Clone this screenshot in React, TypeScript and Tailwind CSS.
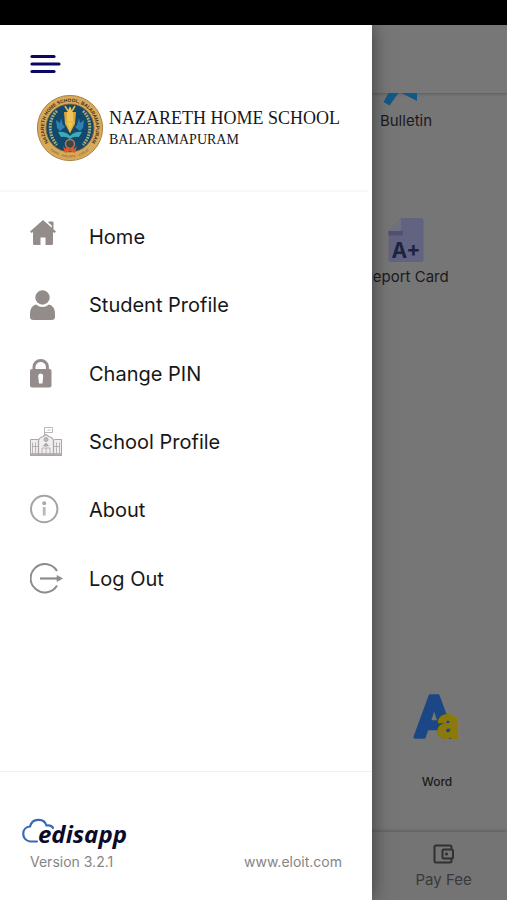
import type { ReactNode } from "react";

const sans = "font-['Inter','Liberation_Sans',sans-serif]";

function MenuLinesIcon() {
  return (
    <svg width="31" height="20" viewBox="0 0 31 20" aria-hidden="true">
      <g stroke="#0c0761" strokeWidth="3.2" strokeLinecap="round">
        <path d="M2 2.5H24" />
        <path d="M2 10H29" />
        <path d="M2 17.5H24" />
      </g>
    </svg>
  );
}

function SchoolSeal() {
  return (
    <svg width="68" height="68" viewBox="0 0 68 68" className="shrink-0" aria-hidden="true">
      <circle cx="34" cy="34" r="32.6" fill="#d9a95a" stroke="#a88348" strokeWidth="1" />
      <circle cx="34" cy="34" r="24" fill="#12486b" stroke="#8d6a35" strokeWidth="0.8" />
      <defs>
        <path id="sealTop" d="M12.500 48.500A26 26 0 1 1 55.500 48.500" />
        <path id="sealBottom" d="M14 56A30 30 0 0 0 54 56" />
      </defs>
      <text className="font-['Liberation_Sans',sans-serif]" fontSize="4.8" fontWeight="700" fill="#3d3218">
        <textPath href="#sealTop" startOffset="50%" textAnchor="middle">
          NAZARETH HOME SCHOOL, BALARAMAPURAM
        </textPath>
      </text>
      <text className="font-['Liberation_Sans',sans-serif]" fontSize="3.5" fill="#7b6032">
        <textPath href="#sealBottom" startOffset="50%" textAnchor="middle">
          LEARN · RADIATE · CREATE
        </textPath>
      </text>
      <path d="M21 17C12 25 12 41 21 51M47 17C56 25 56 41 47 51" fill="none" stroke="#a9ab78" strokeWidth="3" strokeDasharray="1.8 1" />
      <path d="M20 26l4 3 1-5 2 7 2 2-5 4-3-3zM48 26l-4 3-1-5-2 7-2 2 5 4 3-3z" fill="#2f83b4" />
      <path d="M28 18h12l-1 12-5 9-5-9z" fill="#dca638" />
      <path d="M31 19l3-7 3 7v8h-6z" fill="#f0c45a" />
      <path d="M29 12l3 5M39 12l-3 5M31 28l3 9 3-9z" stroke="#e5bd4f" strokeWidth="1.500" fill="#f2cf3c" />
      <path d="M22 38q7-1 12 4 5-5 12-4l-3 5q-5-1-9 2-4-3-9-2z" fill="#3ea9b8" />
      <circle cx="34" cy="50" r="4.500" fill="#41444d" stroke="#a88055" strokeWidth="1.500" />
      <path d="M27 52l3 3 1-3 3 4 3-4 1 3 3-3-2 7-5-2-5 2z" fill="#e0592b" />
    </svg>
  );
}

function HomeIcon() {
  return (
    <svg width="34" height="32" viewBox="0 0 34 32" aria-hidden="true">
      <path d="M13 1L0 12.500 1.500 14 3 13V24.500Q3 26 4.500 26H10.500V18.500H15.500V26H21.500Q23 26 23 24.500V13L24.500 14 26 12.500 23.500 10.300V3.500Q23.500 2.500 22.500 2.500H18.500V3.800L21.800 6.500V8.800Z" fill="#938c8b" />
    </svg>
  );
}

function StudentIcon() {
  return (
    <svg width="34" height="32" viewBox="0 0 34 32" fill="#938c8b" aria-hidden="true">
      <circle cx="12.500" cy="8.500" r="7.200" />
      <path d="M6 15.500Q12.500 20.500 19 15.500C23 16.500 25 20 25 25V28Q25 31 21.500 31H3.500Q0 31 0 28V25C0 20 2 16.500 6 15.500Z" />
    </svg>
  );
}

function LockIcon() {
  return (
    <svg width="34" height="32" viewBox="0 0 34 32" aria-hidden="true">
      <path d="M4 14V9a6.700 6.500 0 0 1 13.400 0V14" fill="none" stroke="#938c8b" strokeWidth="3" />
      <rect x="0" y="11" width="21.500" height="18.500" rx="2" fill="#938c8b" />
      <path d="M10.700 15.500a2.600 2.600 0 0 1 2.400 3.500L12.500 25.500H9L8.300 19a2.600 2.600 0 0 1 2.400-3.500Z" fill="#fff" />
    </svg>
  );
}

function SchoolIcon() {
  return (
    <svg width="34" height="32" viewBox="0 0 34 32" fill="none" stroke="#aaa6a5" aria-hidden="true">
      <path d="M.5 13.500V29.500H31.500V13.500H24.500M.5 13.500H8" fill="#f0eeee" />
      <path d="M8.500 29V14Q10 11 13 10.500L16 8.500 19 10.500Q22.500 11.500 23.500 14V29" fill="#f0eeee" strokeWidth="1.200" />
      <path d="M14.500 9V1.500H22.500V6.500H14.500M17.500 4h3M.5 27.500H31.500M2.500 16.500v11M5.500 16.500v11M26.500 16.500v11M29.500 16.500v11M2 20.500H8M24 20.500H30M12 29V22H20V29M16 22V29" strokeWidth=".8" />
      <circle cx="16" cy="13.500" r="2" fill="#c0bcbc" />
      <path d="M13.500 20l2.500-3 2.500 3z" fill="#aaa6a6" strokeWidth=".8" />
      <path d="M0 29H32" strokeWidth="1.800" />
    </svg>
  );
}

function InfoIcon() {
  return (
    <svg width="34" height="32" viewBox="0 0 34 32" fill="none" aria-hidden="true">
      <circle cx="14.200" cy="15" r="13.200" stroke="#a5a4a4" strokeWidth="2" />
      <circle cx="14.200" cy="9.300" r="2" fill="#aaa9a9" />
      <path d="M14.200 13V21.500" stroke="#bab9b9" strokeWidth="2.800" />
    </svg>
  );
}

function LogOutIcon() {
  return (
    <svg width="34" height="32" viewBox="0 0 34 32" fill="none" stroke="#8d8b8c" strokeWidth="2" aria-hidden="true">
      <path d="M27 8A14.200 14.200 0 1 0 27 22.500" />
      <path d="M10 15.500H28" strokeWidth="2.200" />
      <path d="M27 12.500L32.500 15.500 27 18.500Z" fill="#8d8b8c" strokeWidth=".6" />
    </svg>
  );
}

function BulletinIcon() {
  return (
    <svg width="48" height="14" viewBox="0 0 48 14" aria-hidden="true">
      <path d="M6.500 0H16.500L7.500 12.500 1.500 9ZM19.500 0H35V8Z" fill="#135987" />
    </svg>
  );
}

function ReportCardIcon() {
  return (
    <svg width="36" height="46" viewBox="0 0 36 46" aria-hidden="true">
      <path d="M13 1H33Q35.500 1 35.500 3.500V42.500Q35.500 45 33 45H3Q.5 45 .5 42.500V14Z" fill="#626380" />
      <path d="M13 1V11Q13 14 10 14H.5Z" fill="#70717f" />
      <path d="M.5 14H15V17Q15 18.500 13 18.500H.5Z" fill="#515073" />
      <text x="18" y="41" textAnchor="middle" className="font-['Inter','Liberation_Sans',sans-serif]" fontSize="21" fontWeight="700" fill="#1c2440">
        A+
      </text>
    </svg>
  );
}

function WordIcon() {
  return (
    <svg width="48" height="48" viewBox="0 0 48 48" strokeLinejoin="round" className="overflow-visible" aria-hidden="true">
      <text x="2" y="45" className="font-['Roboto','Liberation_Sans',sans-serif]" fontSize="57" fontWeight="700" fill="#1c4786" stroke="#1c4786" strokeWidth="3.500">
        A
      </text>
      <text x="24" y="46" className="font-['Roboto','Liberation_Sans',sans-serif]" fontSize="42" fontWeight="800" fill="#8b7a0b" stroke="#8b7a0b" strokeWidth="2">
        a
      </text>
    </svg>
  );
}

function WalletIcon() {
  return (
    <svg width="22" height="20" viewBox="0 0 22 20" fill="none" stroke="#303030" strokeWidth="2" strokeLinejoin="round" aria-hidden="true">
      <path d="M18.500 5.500V3Q18.500 1.500 17 1.500H3Q1.500 1.500 1.500 3V17Q1.500 18.500 3 18.500H17Q18.500 18.500 18.500 17V14.500" />
      <rect x="9.500" y="5.500" width="10.500" height="9" rx="1.500" />
      <circle cx="13.500" cy="10" r="1.500" fill="#303030" stroke="none" />
    </svg>
  );
}

function CloudIcon() {
  return (
    <svg width="34" height="26" viewBox="0 0 34 26" fill="none" stroke="#3969b4" strokeWidth="2.200" strokeLinecap="round" aria-hidden="true">
      <path d="M15 23.500H8C-1 22-1 9 8 8.500 10 0 22-.5 24.500 7.500 28 7 30 8 31 10" />
    </svg>
  );
}

const menu: { label: string; icon: ReactNode; box: string }[] = [
  { label: "Home", icon: <HomeIcon />, box: "pb-1" },
  { label: "Student Profile", icon: <StudentIcon />, box: "" },
  { label: "Change PIN", icon: <LockIcon />, box: "" },
  { label: "School Profile", icon: <SchoolIcon />, box: "" },
  { label: "About", icon: <InfoIcon />, box: "" },
  { label: "Log Out", icon: <LogOutIcon />, box: "" },
];

function Dashboard() {
  return (
    <div className="flex flex-1 flex-col bg-[#767676] text-[#1a1a1c]">
      <header className="h-[68px] bg-[#777777] shadow-[0_1px_3px_rgba(0,0,0,0.22)]" />
      <main className="flex flex-1 flex-col items-end">
        <a href="#bulletin" className="flex w-[202px] flex-col items-center gap-1 text-[15px] leading-5">
          <BulletinIcon />
          Bulletin
        </a>
        <a href="#report-card" className="mt-[86px] flex w-[202px] flex-col items-center gap-1 text-[15px] leading-5">
          <ReportCardIcon />
          Report Card
        </a>
        <a href="#word" className="mt-auto mb-10 flex w-[140px] flex-col items-center gap-8 text-xs leading-5 font-medium">
          <WordIcon />
          Word
        </a>
      </main>
      <footer className="grid h-[68px] grid-cols-4 bg-[#747474] shadow-[0_-1px_4px_rgba(0,0,0,0.22)]">
        <a href="#pay-fee" className="col-start-4 flex flex-col items-center gap-1 pt-3 text-[15px] leading-6 text-[#393939]">
          <WalletIcon />
          Pay Fee
        </a>
      </footer>
    </div>
  );
}

function Drawer() {
  return (
    <aside className="absolute inset-y-0 left-0 flex w-[372px] max-w-4/5 flex-col bg-white shadow-[0_0_18px_rgba(0,0,0,0.5)]">
      <div className="mr-1 flex h-[167px] flex-col items-start gap-5 border-b-2 border-[#f8f8f8] pt-[29px]">
        <button type="button" aria-label="Close menu" className="ml-[30px]">
          <MenuLinesIcon />
        </button>
        <div className="flex items-center gap-1 pl-9 whitespace-nowrap text-[#171717]">
          <SchoolSeal />
          <div className="pb-px pl-px font-['Liberation_Serif',serif]">
            <div className="text-lg leading-6">NAZARETH HOME SCHOOL</div>
            <div className="text-sm leading-5">BALARAMAPURAM</div>
          </div>
        </div>
      </div>
      <nav className="mt-[11px] grid h-[410px] grid-rows-6">
        {menu.map((item) => (
          <a key={item.label} href="#menu" className="flex items-center gap-[25px] pl-[30px] text-xl text-[#171717]">
            <span className={item.box}>{item.icon}</span>
            {item.label}
          </a>
        ))}
      </nav>
      <div className="mt-auto h-[129px] border-t border-[#f1f1f1] px-[30px] pt-[46px]">
        <div className="-ml-2 flex h-[34px] items-start">
          <CloudIcon />
          <span className="-ml-[18px] font-['Open_Sans','Liberation_Sans',sans-serif] text-2xl leading-8 font-bold text-[#0b0a2a] italic">
            edisapp
          </span>
        </div>
        <div className="flex justify-between text-sm leading-5 text-[#858585]">
          <span>Version 3.2.1</span>
          <a href="#eloit">www.eloit.com</a>
        </div>
      </div>
    </aside>
  );
}

export default function App() {
  return (
    <div className={`flex min-h-screen flex-col bg-black ${sans}`}>
      <div className="h-[25px] bg-black" />
      <div className="relative flex flex-1 flex-col overflow-hidden">
        <Dashboard />
        <Drawer />
      </div>
    </div>
  );
}
